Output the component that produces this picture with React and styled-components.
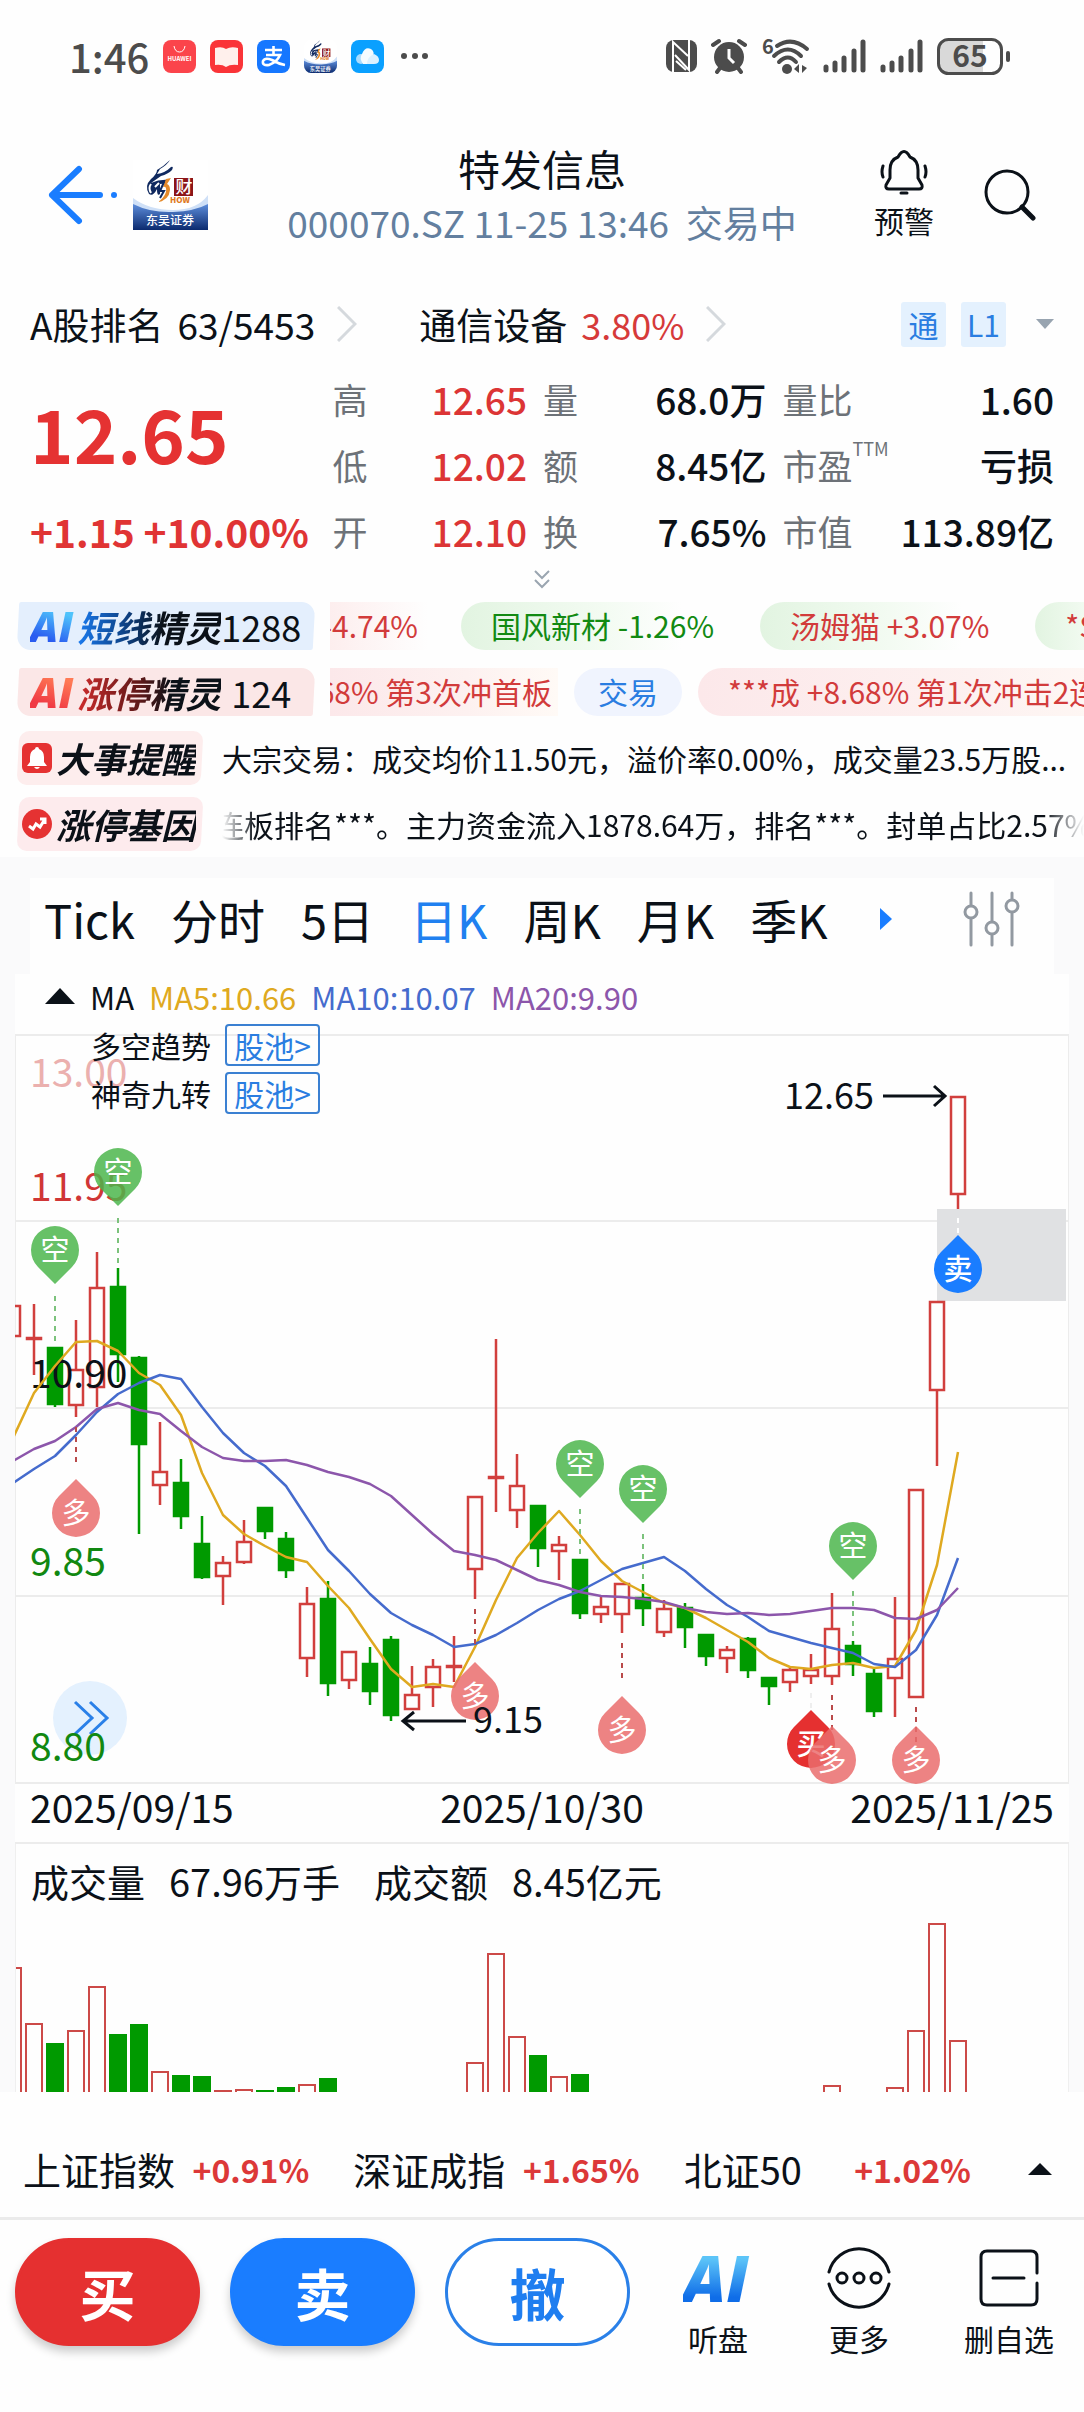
import React from "react";
import styled, { createGlobalStyle } from "styled-components";

const sans = `"Noto Sans CJK SC", "Noto Sans", sans-serif`;

const blue = "#1a7dff";
const ink = "#0b1118";

const GlobalStyle = createGlobalStyle`
  * {
    box-sizing: border-box;
  }
  body {
    margin: 0;
    background: #fefefe;
    color: ${ink};
    font-family: ${sans};
  }
  button {
    margin: 0;
    padding: 0;
    border: 0;
    background: none;
    color: inherit;
    font-family: inherit;
    cursor: pointer;
  }
  a {
    color: inherit;
    text-decoration: none;
  }
  svg {
    display: block;
    flex: none;
  }
  h1, p, ul, dl, dd, dt {
    margin: 0;
    padding: 0;
  }
`;

const Page = styled.div`
  display: flex;
  flex-direction: column;
  overflow: hidden;
`;

/* status bar */
const StatusBar = styled.div`
  display: flex;
  align-items: center;
  justify-content: space-between;
  height: 112px;
  padding: 0 73px 0 69px;
  color: #4c4c4c;
`;

const StatusGroup = styled.div`
  display: flex;
  align-items: center;
  gap: 14px;
`;

const Clock = styled.span`
  font-size: 40px;
  font-weight: 500;
  line-height: 46px;
`;

/* header */
const Header = styled.header`
  display: grid;
  grid-template-columns: 1fr auto 1fr;
  align-items: center;
  height: 170px;
  padding: 0 48px 4px;
`;

const HeaderSide = styled.div`
  display: flex;
  align-items: center;
  justify-content: ${(p) => (p.$end ? "flex-end" : "flex-start")};
  gap: ${(p) => (p.$end ? 50 : 15)}px;
`;

const HeaderTitle = styled.div`
  text-align: center;
`;

const StockName = styled.h1`
  font-size: 42px;
  font-weight: 400;
  line-height: 54px;
`;

const StockMeta = styled.p`
  color: #637f9f;
  font-size: 37px;
  line-height: 54px;
  white-space: pre;
`;

const AlertButton = styled.button`
  display: flex;
  flex-direction: column;
  align-items: center;
  font-size: 30px;
  line-height: 42px;
  gap: 4px;
`;

/* rank row */
const RankRow = styled.div`
  display: flex;
  align-items: center;
  height: 84px;
  padding: 0 30px;
`;

const RankLink = styled.a`
  display: flex;
  align-items: center;
  margin-right: 62px;
  gap: 14px;
  font-size: 37px;
  white-space: nowrap;

  svg {
    margin-left: 8px;
  }
`;

const Rise = styled.span`
  color: #d63a3a;
  font-size: 36px;
`;

const Badges = styled.div`
  display: flex;
  align-items: center;
  gap: 15px;
  margin-left: auto;

  svg {
    margin-left: 15px;
  }
`;

const Badge = styled.span`
  width: 45px;
  border-radius: 3px;
  background: #e4f1fe;
  color: #2a7de1;
  font-size: 30px;
  line-height: 45px;
  text-align: center;
`;

/* quote */
const Quote = styled.section`
  display: grid;
  grid-template-columns: 286fr 194fr 223fr 271fr;
  grid-template-rows: repeat(3, 66px);
  gap: 0 16px;
  align-items: center;
  padding: 0 30px;
`;

const Price = styled.strong`
  grid-row: span 2;
  color: #e53232;
  font-size: 74px;
  font-weight: 700;
  line-height: 96px;
`;

const Change = styled.strong`
  color: #e03434;
  font-size: 39px;
  font-weight: 700;
  line-height: 60px;
  white-space: nowrap;
`;

const Stat = styled.dl`
  display: flex;
  align-items: center;
  justify-content: space-between;
  white-space: nowrap;

  dt {
    color: #6d7278;
    font-size: 35px;
    line-height: 48px;
  }
  sup {
    font-size: 18px;
    line-height: 0;
    vertical-align: 24px;
  }
  dd {
    color: ${(p) => (p.$up ? "#dc3535" : ink)};
    font-size: 37px;
    font-weight: 500;
    line-height: 48px;
  }
`;

const Expand = styled.button`
  display: flex;
  align-items: center;
  justify-content: center;
  height: 29px;
`;

/* feed rows */
const FeedRow = styled.div`
  display: flex;
  align-items: center;
  height: 66px;
  padding-left: 18px;
`;

const FeedTag = styled.div`
  position: relative;
  display: flex;
  flex: none;
  align-items: center;
  width: ${(p) => (p.$wide ? 296 : 184)}px;
  height: ${(p) => (p.$wide ? 48 : 54)}px;
  margin-right: ${(p) => (p.$wide ? 16 : 20)}px;
  padding-left: ${(p) => (p.$wide ? 12 : 4)}px;
  gap: ${(p) => (p.$wide ? 0 : 4)}px;
  white-space: nowrap;
  z-index: 0;

  &::before {
    content: "";
    position: absolute;
    inset: 0;
    z-index: -1;
    border-radius: ${(p) => (p.$wide ? "2px 14px 2px 14px" : "10px")};
    background: ${(p) => p.$bg};
    transform: skewX(-3deg);
  }
`;

const TagTitle = styled.span`
  background: ${(p) => p.$fill || ink};
  background-clip: text;
  color: transparent;
  font-size: ${(p) => (p.$small ? 35 : 36)}px;
  font-style: italic;
  font-weight: 700;
  line-height: 48px;
`;

const Count = styled.span`
  min-width: 80px;
  font-size: 36px;
  line-height: 48px;
  text-align: center;
`;

const AiMark = styled.span`
  padding-right: 4px;
  background: ${(p) => p.$fill};
  background-clip: text;
  color: transparent;
  font-family: "Open Sans", sans-serif;
  font-size: ${(p) => p.$size}px;
  font-style: italic;
  font-weight: 800;
  line-height: 48px;
`;

const Ticker = styled.div`
  display: flex;
  flex: 1;
  min-width: 0;
  gap: 16px;
  overflow: hidden;
`;

const Chip = styled.a`
  display: flex;
  flex: none;
  justify-content: flex-end;
  width: ${(p) => (p.$cut ? `${p.$cut}px` : "auto")};
  height: 48px;
  padding: 0 ${(p) => p.$pad || 30}px;
  padding-left: ${(p) => (p.$cut ? 0 : p.$pad || 30)}px;
  overflow: hidden;
  border-radius: ${(p) => (p.$cut ? "0" : "24px")};
  background: ${(p) => p.$bg};
  color: ${(p) => p.$color || "#d23b3b"};
  font-size: 30px;
  line-height: 46px;
  white-space: nowrap;
`;

const FeedText = styled.p`
  flex: 1;
  min-width: 0;
  padding-right: 8px;
  overflow: hidden;
  font-size: 30px;
  line-height: 48px;
  text-overflow: ellipsis;
  white-space: nowrap;
`;

const FeedMarquee = styled(FeedText)`
  padding-right: 0;
  text-indent: -8px;
  text-overflow: clip;
  mask-image: linear-gradient(
    90deg,
    transparent,
    #000 34px,
    #000 calc(100% - 40px),
    transparent
  );
`;

/* chart */
const ChartSection = styled.section`
  padding: 21px 15px 0;
  background: #fafafb;
`;

const Tabs = styled.nav`
  display: flex;
  align-items: center;
  height: 96px;
  margin: 0 15px;
  padding: 0 34px 14px 14px;
  gap: 36px;
  background: #fefefe;
`;

const Tab = styled.button`
  color: ${(p) => (p.$active ? "#2080f0" : ink)};
  font-size: 47px;
  line-height: 60px;
  white-space: nowrap;
`;

const IconButton = styled.button`
  margin-left: ${(p) => (p.$last ? "auto" : "16px")};
`;

const ChartPanel = styled.div`
  background: #fefefe;
`;

const Legend = styled.div`
  display: flex;
  align-items: center;
  height: 60px;
  padding: 0 30px 16px;
  gap: 15px;
  font-size: 31px;
`;

const LegendItem = styled.span`
  color: ${(p) => p.$color};
`;

const ChartArea = styled.div`
  position: relative;

  > svg {
    width: 100%;
    height: auto;
  }
`;

const PoolList = styled.div`
  position: absolute;
  top: -13px;
  left: 76px;
`;

const PoolRow = styled.div`
  display: flex;
  align-items: center;
  height: 48px;
  gap: 14px;
  font-size: 30px;
`;

const PoolButton = styled.button`
  width: 95px;
  height: 42px;
  border: 2px solid #3a80d2;
  border-radius: 4px;
  color: #2a7de1;
  font-size: 30px;
  line-height: 36px;
`;

const Dates = styled.div`
  display: flex;
  justify-content: space-between;
  height: 60px;
  padding: 0 15px;
  border-bottom: 2px solid #ececec;
  font-size: 39px;
  line-height: 45px;
`;

const VolumeText = styled.p`
  display: flex;
  padding: 10px 15px 2px;
  gap: 34px;
  font-size: 38px;
  line-height: 54px;
`;

const VolumeItem = styled.span`
  display: flex;
  gap: 24px;
`;

const VolumeArea = styled.div`
  border: solid #efefef;
  border-width: 0 1px;

  svg {
    width: 100%;
    height: auto;
  }
`;

/* footer */
const IndexBar = styled.div`
  display: grid;
  grid-template-columns: 286fr 286fr 287fr 37fr;
  gap: 44px;
  align-items: center;
  height: 128px;
  padding: 28px 32px 0 23px;
  border-bottom: 3px solid #ebebeb;

  > svg {
    justify-self: end;
  }
`;

const IndexItem = styled.a`
  display: flex;
  align-items: center;
  justify-content: space-between;
  font-size: 38px;
  line-height: 54px;
  white-space: nowrap;

  strong {
    color: #dc3838;
    font-size: 32px;
    font-weight: 700;
  }
`;

const ActionBar = styled.footer`
  display: flex;
  align-items: flex-start;
  padding: 18px 30px 60px 15px;
`;

const TradeButton = styled.button`
  width: 185px;
  height: 108px;
  margin-right: 30px;
  border: 3px solid ${(p) => p.$line};
  border-radius: 54px;
  background: ${(p) => p.$bg};
  box-shadow: ${(p) => (p.$flat ? "none" : "0 6px 10px rgba(0, 0, 0, 0.2)")};
  color: ${(p) => p.$color};
  font-size: 56px;
  font-weight: 700;
  line-height: 96px;
`;

const Tools = styled.div`
  display: grid;
  flex: 1;
  grid-template-columns: 72px 1fr auto;
  padding-left: 22px;
`;

const Tool = styled.button`
  display: flex;
  flex-direction: column;
  align-items: center;
  font-size: 30px;
  line-height: 40px;
`;

const ToolIcon = styled.span`
  display: flex;
  align-items: center;
  justify-content: center;
  height: 80px;
`;

const Svg = ({ w, h, children, ...rest }) => (
  <svg width={w} height={h} viewBox={`0 0 ${w} ${h}`} fill="none" aria-hidden="true" {...rest}>
    {children}
  </svg>
);

const BrokerLogo = ({ w = 75, h = 70, round = 0 }) => (
  <svg width={w} height={h} viewBox="0 0 75 70" preserveAspectRatio="none" aria-hidden="true">
    <defs>
      <linearGradient id={`wave${w}`} x1="0" y1="0" x2="0" y2="1">
        <stop offset="0" stopColor="#5d8ddb" />
        <stop offset="1" stopColor="#0b2a6e" />
      </linearGradient>
      <clipPath id={`clip${w}`}>
        <rect width="75" height="70" rx={round} />
      </clipPath>
    </defs>
    <g clipPath={`url(#clip${w})`}>
      <rect width="75" height="70" fill="#fff" />
      <path d="M0 38Q16 50 40 50T75 35V70H0Z" fill="#cfe0f7" />
      <path d="M0 44Q18 53 40 52T75 44V70H0Z" fill={`url(#wave${w})`} />
      <path d="M37 0Q34 5 27 9L24 14Q32 13 38 7Q41 6 39 10Q35 14 28 16L18 23Q27 19 36 20Q33 24 27 24V34Q24 37 24 29Q20 37 16 34Q11 26 18 19Q24 14 24 10Q31 6 37 0Z" fill="#10295f" />
      <path d="M18 24Q15 28 18 33M22 27L26 23" stroke="#fff" strokeWidth="2" fill="none" />
      <path d="M33 19L30 27Q34 26 33 32Q31 38 25 42Q36 40 37 30Q37 25 34 24L38 18Z" fill="#e58a2b" />
      <path d="M31 22L27 31H31L27 38" stroke="#10295f" strokeWidth="2" fill="none" />
      <rect x="41" y="18" width="19" height="18" fill="#8c1518" />
      <text x="51" y="33" textAnchor="middle" fontSize="17" fontWeight="500" fill="#fff">财</text>
      <text x="47" y="43" textAnchor="middle" fontSize="8" fontWeight="900" fill="#e07a1f">HOW</text>
      <text x="37" y="65" textAnchor="middle" fontSize="12" fontWeight="500" fill="#fff">东吴证券</text>
    </g>
  </svg>
);

const StatusApps = () => (
  <>
    <Svg w={33} h={33}>
      <rect width="33" height="33" rx="8" fill="#fb444b" />
      <path d="M11 6Q12 12 16.500 12T22 6" stroke="#fff" strokeWidth="1" />
      <text x="16.500" y="21" textAnchor="middle" fontSize="6" fontWeight="700" fill="#fff">HUAWEI</text>
    </Svg>
    <Svg w={33} h={33}>
      <rect width="33" height="33" rx="8" fill="#fa3438" />
      <path d="M5 8Q12 6 16 9Q21 6 28 8V25Q20 24 16 27Q12 24 5 25Z" fill="#fff0ec" />
    </Svg>
    <Svg w={33} h={33}>
      <rect width="33" height="33" rx="8" fill="#1677ff" />
      <path d="M8 10H25M16.500 6V15M9 15H23Q20 22 12 25Q5 26 6 21Q8 17 15 20Q22 24 28 25" stroke="#fff" strokeWidth="2.600" />
    </Svg>
    <BrokerLogo w={33} h={33} round={16} />
    <Svg w={33} h={33}>
      <rect width="33" height="33" rx="8" fill="#0aa0ff" />
      <circle cx="10" cy="19" r="5" fill="#a9dcff" />
      <path d="M12 24Q8 18 11 14Q14 6 20 9Q24 12 22 16Q19 18 17 24Z" fill="#f4fbff" />
      <path d="M16 24Q16 17 23 14Q28 16 28 20T23 24Z" fill="#dcf1ff" />
    </Svg>
    <Svg w={33} h={33}>
      <circle cx="6" cy="16" r="3" fill="#4c4c4c" />
      <circle cx="17" cy="16" r="3" fill="#4c4c4c" />
      <circle cx="27" cy="16" r="3" fill="#4c4c4c" />
    </Svg>
  </>
);

const Signal = () => (
  <Svg w={43} h={36} stroke="#4c4c4c" strokeWidth="5" strokeLinecap="round">
    <path d="M3 29V32M12 25V32M21 20V32M31 13V32M40 4V32" />
  </Svg>
);

const StatusSignals = () => (
  <>
    <Svg w={31} h={32}>
      <rect width="31" height="32" rx="8" fill="#4c4c4c" />
      <path d="M7 32V2L22 16M23 0V30L9 15M10 21L20 30" stroke="#fff" strokeWidth="2" />
    </Svg>
    <Svg w={36} h={36} stroke="#4c4c4c" strokeLinecap="round">
      <circle cx="18" cy="19" r="15" fill="#4c4c4c" stroke="none" />
      <path d="M2 7L8 3M34 7L28 3M9 30L6 34M27 30L30 34" strokeWidth="4" />
      <path d="M18 11V20L23 25" stroke="#fff" strokeWidth="3" strokeLinecap="butt" />
    </Svg>
    <Svg w={48} h={36} stroke="#4c4c4c" strokeWidth="4" strokeLinecap="round" overflow="visible">
      <text x="1" y="16" fontSize="20" fontWeight="700" fill="#4c4c4c" stroke="none">6</text>
      <path d="M16 8Q31 -2 46 11M13 18Q27 5 40 18M18 24Q27 15 35 24" />
      <circle cx="26" cy="31" r="5" fill="#4c4c4c" stroke="none" />
      <path d="M38 26V35L33 31ZM41 35V27L46 30Z" fill="#4c4c4c" stroke="none" />
    </Svg>
    <Signal />
    <Signal />
    <Svg w={74} h={37}>
      <path d="M11 2H46V35H11Q2 35 2 26V11Q2 2 11 2Z" fill="#d9d9d9" />
      <rect x="1.500" y="1.500" width="63" height="34" rx="10" stroke="#4c4c4c" strokeWidth="3" />
      <rect x="69" y="13" width="4" height="11" rx="2" fill="#4c4c4c" />
      <text x="33" y="29" textAnchor="middle" fontSize="30" fontWeight="700" fill="#4c4c4c">65</text>
    </Svg>
  </>
);

const ChevronRight = () => (
  <Svg w={20} h={36} stroke="#d5d9dd" strokeWidth="3">
    <path d="M1 1L18 18L1 35" />
  </Svg>
);

// candle: [up, high, top, bottom, low], 21px per day
const CANDLES = [
  [1, 271, 271, 303, 303],
  [1, 270, 303, 305, 341],
  [0, 313, 313, 371, 373],
  [1, 286, 335, 372, 383],
  [1, 218, 253, 354, 373],
  [0, 234, 252, 321, 348],
  [0, 322, 323, 411, 500],
  [1, 388, 437, 452, 471],
  [0, 425, 448, 483, 495],
  [0, 482, 509, 544, 545],
  [1, 522, 528, 543, 571],
  [1, 486, 507, 529, 530],
  [0, 473, 473, 498, 505],
  [0, 498, 504, 537, 544],
  [1, 553, 569, 625, 643],
  [0, 547, 564, 650, 662],
  [1, 617, 617, 647, 655],
  [0, 613, 629, 658, 671],
  [0, 602, 605, 682, 687],
  [1, 632, 660, 676, 676],
  [1, 625, 632, 654, 673],
  [1, 602, 631, 632, 648],
  [1, 462, 462, 536, 565],
  [1, 305, 442, 443, 478],
  [1, 420, 451, 477, 494],
  [0, 471, 471, 515, 533],
  [1, 502, 510, 518, 546],
  [0, 525, 525, 580, 585],
  [1, 563, 572, 581, 589],
  [1, 549, 549, 581, 599],
  [0, 550, 563, 575, 592],
  [1, 566, 574, 599, 603],
  [0, 569, 573, 594, 614],
  [0, 600, 600, 623, 632],
  [1, 612, 615, 625, 639],
  [0, 603, 604, 637, 644],
  [0, 643, 643, 653, 671],
  [1, 634, 635, 649, 658],
  [1, 620, 635, 643, 650],
  [1, 559, 594, 643, 651],
  [0, 607, 611, 631, 642],
  [0, 635, 639, 678, 683],
  [1, 563, 624, 645, 683],
  [1, 455, 455, 664, 664],
  [1, 267, 267, 357, 432],
  [1, 62, 62, 161, 175],
];

const MA5 = [404, 359, 332, 308, 307, 317, 339, 351, 381, 439, 481, 500, 512, 523, 528, 552, 574, 605, 635, 653, 650, 653, 613, 566, 524, 499, 477, 501, 527, 547, 558, 569, 574, 584, 596, 608, 624, 633, 635, 631, 629, 634, 632, 596, 531, 418];
const MA10 = [449, 435, 422, 401, 378, 360, 349, 341, 345, 373, 399, 419, 432, 452, 484, 516, 537, 560, 579, 591, 601, 613, 610, 601, 589, 576, 565, 557, 546, 535, 529, 523, 537, 555, 571, 583, 597, 603, 609, 614, 619, 630, 633, 616, 581, 524];
const MA20 = [427, 415, 407, 393, 375, 369, 376, 380, 397, 413, 424, 427, 427, 426, 431, 438, 443, 450, 462, 481, 500, 517, 521, 526, 536, 546, 551, 558, 562, 563, 565, 568, 574, 578, 580, 579, 581, 580, 577, 574, 574, 576, 584, 585, 576, 554];

// pin: [day, tip, label, fill, dash start, dash end, dash colour, points down]
const PINS = [
  [5, 172, "空", "#4bb64bd8", 184, 232, "#7cc27c", true],
  [2, 250, "空", "#4bb64bd8", 262, 311, "#7cc27c", true],
  [27, 464, "空", "#4bb64bd8", 475, 522, "#7cc27c", true],
  [30, 489, "空", "#4bb64bd8", 500, 548, "#7cc27c", true],
  [40, 546, "空", "#4bb64bd8", 557, 605, "#7cc27c", true],
  [3, 445, "多", "#ea6d6dd8", 393, 430, "#b94a4a"],
  [22, 628, "多", "#ea6d6dd8", 575, 612, "#b94a4a"],
  [29, 662, "多", "#ea6d6dd8", 609, 645, "#b94a4a"],
  [38, 676, "买", "#e53030", 659, 674, "#eeeeee"],
  [39, 692, "多", "#ea6d6dd8", 661, 696, "#b94a4a"],
  [43, 692, "多", "#ea6d6dd8", 673, 710, "#b94a4a"],
  [45, 201, "卖", blue, 184, 200, "#ffffff"],
];

// volume: [day, height, up]
const VOLUMES = [
  [0, 125, 1], [1, 69, 1], [2, 49, 0], [3, 62, 1], [4, 106, 1], [5, 58, 0],
  [6, 68, 0], [7, 21, 1], [8, 17, 0], [9, 16, 0], [10, 2, 1], [11, 3, 1],
  [12, 2, 0], [13, 5, 0], [14, 8, 1], [15, 14, 0], [22, 30, 1], [23, 139, 1],
  [24, 56, 1], [25, 37, 0], [26, 16, 1], [27, 18, 0], [39, 7, 1], [42, 5, 1],
  [43, 62, 1], [44, 169, 1], [45, 52, 1],
];

const dayX = (i) => i * 21 - 2;
const line = (values) => values.map((y, i) => `${dayX(i)},${y}`).join(" ");

const Candle = ({ i, data: [up, high, top, bottom, low] }) => {
  const x = dayX(i);
  const color = up ? "#d13f3d" : "#009a00";
  return (
    <g stroke={color} strokeWidth="2.500">
      <path d={`M${x} ${high}V${top}M${x} ${bottom}V${low}`} />
      <rect
        x={x - 7}
        y={top + 1}
        width="14"
        height={Math.max(bottom - top - 2, 1)}
        fill={up ? "none" : color}
      />
    </g>
  );
};

const Pin = ({ data: [i, tip, label, fill, from, to, dash, down] }) => {
  const dir = down ? -1 : 1;
  return (
    <g>
      <path d={`M${dayX(i)} ${from}V${to}`} stroke={dash} strokeWidth="2" strokeDasharray="5 5" />
      <g transform={`translate(${dayX(i)} ${tip})`}>
        <path
          d={down ? "M0 0L-17 -17A24 24 0 1 1 17 -17Z" : "M0 0L-17 17A24 24 0 1 0 17 17Z"}
          fill={fill}
        />
        <text
          y={dir * 34 + 11}
          textAnchor="middle"
          fontSize="29"
          fill="#fff"
          fontWeight={label === "买" || label === "卖" ? 500 : 400}
        >
          {label}
        </text>
      </g>
    </g>
  );
};

const KLineChart = () => (
  <svg viewBox="0 0 1054 750" role="img" aria-label="日K">
    <path d="M0 1H1054M0 187H1054M0 374H1054M0 562H1054M0 749H1054" stroke="#ececec" strokeWidth="2" />
    <path d="M0.500 0V750M1053.500 0V750" stroke="#ececec" />
    <rect x="922" y="175" width="129" height="92" fill="#e0e1e3" />
    {CANDLES.map((data, i) => (
      <Candle key={i} i={i} data={data} />
    ))}
    <g fontSize="39">
      <text x="15" y="53" fill="#ebb0ae">13.00</text>
      <text x="15" y="167" fill="#d03636">11.95</text>
      <text x="15" y="354" fill={ink}>10.90</text>
      <text x="15" y="542" fill="#118811">9.85</text>
    </g>
    <g fill="none" strokeWidth="2.500" strokeLinejoin="round">
      <polyline points={line(MA5)} stroke="#dfa920" />
      <polyline points={line(MA10)} stroke="#456bcd" />
      <polyline points={line(MA20)} stroke="#8c56ab" />
    </g>
    {PINS.map((data) => (
      <Pin key={data[0]} data={data} />
    ))}
    <g fontSize="36" fill={ink}>
      <text x="769" y="75">12.65</text>
      <text x="458" y="699">9.15</text>
    </g>
    <path
      d="M868 62H930M919 52L930 62L919 72M451 687H388M399 678L388 687L399 696"
      stroke={ink}
      strokeWidth="3"
      fill="none"
    />
    <circle cx="75" cy="684" r="37" fill="#e4f1fe" />
    <path d="M60 668L77 684L60 700M75 668L92 684L75 700" stroke="#2a80e8" strokeWidth="3" fill="none" />
    <text x="15" y="727" fontSize="39" fill="#118811">8.80</text>
  </svg>
);

const VolumeChart = () => (
  <svg viewBox="0 0 1052 182" role="img" aria-label="成交量">
    {VOLUMES.map(([i, h, up]) => (
      <rect
        key={i}
        x={dayX(i) - 9}
        y={183 - h}
        width="16"
        height={h + 4}
        fill={up ? "#fefefe" : "#009a00"}
        stroke={up ? "#cc4a48" : "#009a00"}
        strokeWidth="2"
      />
    ))}
  </svg>
);

const STATS = [
  ["高", "12.65", true],
  ["量", "68.0万"],
  ["量比", "1.60"],
  ["低", "12.02", true],
  ["额", "8.45亿"],
  ["市盈", "亏损", false, "TTM"],
  ["开", "12.10", true],
  ["换", "7.65%"],
  ["市值", "113.89亿"],
];

const TABS = ["Tick", "分时", "5日", "日K", "周K", "月K", "季K"];

const INDEXES = [
  ["上证指数", "+0.91%"],
  ["深证成指", "+1.65%"],
  ["北证50", "+1.02%"],
];

const greenFade = "linear-gradient(90deg, #e2f4e1, #f3fbf2 50%, #fefefe 78%)";
const pinkFade = "linear-gradient(90deg, #fce8ea, #fdf1f0 60%, #fffaf6)";
const pinkTail = "linear-gradient(90deg, #fdeeee, #fefefe 85%)";

const StatItem = ({ data: [label, value, up, sup] }) => (
  <Stat $up={up}>
    <dt>
      {label}
      {sup && <sup>{sup}</sup>}
    </dt>
    <dd>{value}</dd>
  </Stat>
);

function App() {
  return (
    <Page>
      <GlobalStyle />
      <StatusBar>
        <StatusGroup>
          <Clock>1:46</Clock>
          <StatusApps />
        </StatusGroup>
        <StatusGroup>
          <StatusSignals />
        </StatusGroup>
      </StatusBar>

      <Header>
        <HeaderSide>
          <button aria-label="返回">
            <Svg w={70} h={60} stroke={blue} strokeWidth="6" strokeLinecap="round" strokeLinejoin="round">
              <path d="M31 4L4 30L31 56M4 30H52" />
              <circle cx="66" cy="30" r="3" fill={blue} stroke="none" />
            </Svg>
          </button>
          <BrokerLogo />
        </HeaderSide>
        <HeaderTitle>
          <StockName>特发信息</StockName>
          <StockMeta>000070.SZ 11-25 13:46  交易中</StockMeta>
        </HeaderTitle>
        <HeaderSide $end>
          <AlertButton>
            <Svg w={48} h={46} stroke={ink} strokeWidth="3" strokeLinecap="round" strokeLinejoin="round">
              <path d="M18 8Q24 -3 30 8Q38 11 38 21V29L42 36Q43 40 39 40H9Q5 40 6 36L10 29V21Q10 11 18 8Z" />
              <path d="M21 44H27M3 17Q1 23 3 28M45 17Q47 23 45 28" />
            </Svg>
            预警
          </AlertButton>
          <button aria-label="搜索">
            <Svg w={52} h={52} stroke={ink} strokeLinecap="round">
              <circle cx="23" cy="23" r="21" strokeWidth="3" />
              <path d="M38 38L49 49" strokeWidth="5" />
            </Svg>
          </button>
        </HeaderSide>
      </Header>

      <RankRow>
        <RankLink href="#rank">
          <span>A股排名</span>
          <span>63/5453</span>
          <ChevronRight />
        </RankLink>
        <RankLink href="#sector">
          <span>通信设备</span>
          <Rise>3.80%</Rise>
          <ChevronRight />
        </RankLink>
        <Badges>
          <Badge>通</Badge>
          <Badge>L1</Badge>
          <Svg w={18} h={10}>
            <path d="M0 0H18L9 10Z" fill="#98a4b0" />
          </Svg>
        </Badges>
      </RankRow>

      <Quote>
        <Price>12.65</Price>
        {STATS.slice(0, 6).map((data) => (
          <StatItem key={data[0]} data={data} />
        ))}
        <Change>+1.15 +10.00%</Change>
        {STATS.slice(6).map((data) => (
          <StatItem key={data[0]} data={data} />
        ))}
      </Quote>

      <Expand aria-label="展开">
        <Svg w={16} h={20} stroke="#9aa5b0" strokeWidth="2">
          <path d="M1 2L8 9L15 2M1 11L8 18L15 11" />
        </Svg>
      </Expand>

      <FeedRow>
        <FeedTag $wide $bg="#e4effd">
          <AiMark $size={42} $fill="linear-gradient(200deg, #4fc3fb 25%, #2a5cf0 75%)">AI</AiMark>
          <TagTitle $fill="linear-gradient(90deg, #1a7bf0, #0d3f80 35%, #0b1118 60%)">短线精灵</TagTitle>
          <Count>1288</Count>
        </FeedTag>
        <Ticker>
          <Chip $cut={115} $pad={27} $bg={pinkTail}>-4.74%</Chip>
          <Chip $bg={greenFade} $color="#128a12">国风新材 -1.26%</Chip>
          <Chip $bg={greenFade}>汤姆猫 +3.07%</Chip>
          <Chip $bg={greenFade}>*ST</Chip>
        </Ticker>
      </FeedRow>

      <FeedRow>
        <FeedTag $wide $bg="#fbe7e7">
          <AiMark $size={42} $fill="linear-gradient(200deg, #ff7a55 25%, #f03a44 75%)">AI</AiMark>
          <TagTitle $fill="linear-gradient(90deg, #cf2c2c, #5a1818 45%, #0b1118 65%)">涨停精灵</TagTitle>
          <Count>124</Count>
        </FeedTag>
        <Ticker>
          <Chip $cut={228} $pad={6} $bg={pinkFade}>+9.68% 第3次冲首板</Chip>
          <Chip $pad={24} $bg="#f0f4fe" $color="#2a7de1" as="button">交易</Chip>
          <Chip $bg={pinkFade}>***成 +8.68% 第1次冲击2连板</Chip>
        </Ticker>
      </FeedRow>

      <FeedRow>
        <FeedTag $bg="#fdeded">
          <Svg w={30} h={30}>
            <rect width="30" height="30" rx="6" fill="#e53232" />
            <path d="M15 4Q17 4 17 6Q22 8 22 14V19L25 23H5L8 19V14Q8 8 13 6Q13 4 15 4ZM12 24H18Q15 28 12 24Z" fill="#fff" />
          </Svg>
          <TagTitle $small>大事提醒</TagTitle>
        </FeedTag>
        <FeedText>大宗交易：成交均价11.50元，溢价率0.00%，成交量23.5万股...</FeedText>
      </FeedRow>

      <FeedRow>
        <FeedTag $bg="#fdebed">
          <Svg w={30} h={30}>
            <circle cx="15" cy="15" r="15" fill="#e53232" />
            <path d="M7 17L11 20L14 15L18 18L23 10M18 10H23V15" stroke="#fff" strokeWidth="3" />
          </Svg>
          <TagTitle $small>涨停基因</TagTitle>
        </FeedTag>
        <FeedMarquee>连板排名***。主力资金流入1878.64万，排名***。封单占比2.57%</FeedMarquee>
      </FeedRow>

      <ChartSection>
        <Tabs>
          {TABS.map((name) => (
            <Tab key={name} $active={name === "日K"}>
              {name}
            </Tab>
          ))}
          <IconButton aria-label="更多周期">
            <Svg w={12} h={22}>
              <path d="M0 0L12 11L0 22Z" fill={blue} />
            </Svg>
          </IconButton>
          <IconButton $last aria-label="设置">
            <Svg w={57} h={56} stroke="#9299a1" strokeWidth="3" strokeLinecap="round">
              <path d="M8 2V14M8 28V54M29 2V30M29 44V54M49 2V8M49 22V54" />
              <circle cx="8" cy="21" r="6" />
              <circle cx="29" cy="37" r="6" />
              <circle cx="49" cy="15" r="6" />
            </Svg>
          </IconButton>
        </Tabs>

        <ChartPanel>
          <Legend>
            <Svg w={30} h={16}>
              <path d="M0 16L15 0L30 16Z" fill={ink} />
            </Svg>
            <LegendItem>MA</LegendItem>
            <LegendItem $color="#dfa920">MA5:10.66</LegendItem>
            <LegendItem $color="#456bcd">MA10:10.07</LegendItem>
            <LegendItem $color="#8c56ab">MA20:9.90</LegendItem>
          </Legend>
          <ChartArea>
            <KLineChart />
            <PoolList>
              <PoolRow>
                多空趋势<PoolButton>股池&gt;</PoolButton>
              </PoolRow>
              <PoolRow>
                神奇九转<PoolButton>股池&gt;</PoolButton>
              </PoolRow>
            </PoolList>
          </ChartArea>
          <Dates>
            <span>2025/09/15</span>
            <span>2025/10/30</span>
            <span>2025/11/25</span>
          </Dates>
          <VolumeArea>
            <VolumeText>
              <VolumeItem>
                <span>成交量</span>
                <span>67.96万手</span>
              </VolumeItem>
              <VolumeItem>
                <span>成交额</span>
                <span>8.45亿元</span>
              </VolumeItem>
            </VolumeText>
            <VolumeChart />
          </VolumeArea>
        </ChartPanel>
      </ChartSection>

      <IndexBar>
        {INDEXES.map(([name, change]) => (
          <IndexItem key={name} href={`#${name}`}>
            {name}
            <strong>{change}</strong>
          </IndexItem>
        ))}
        <Svg w={24} h={12}>
          <path d="M0 12L12 0L24 12Z" fill={ink} />
        </Svg>
      </IndexBar>

      <ActionBar>
        <TradeButton $bg="#e53030" $line="#e53030" $color="#fff">买</TradeButton>
        <TradeButton $bg={blue} $line={blue} $color="#fff">卖</TradeButton>
        <TradeButton $flat $bg="#fff" $line="#2a80e8" $color="#1f7ef0">撤</TradeButton>
        <Tools>
          <Tool>
            <ToolIcon>
              <AiMark $size={64} $fill="linear-gradient(180deg, #5cc4f8 10%, #0f6de8 90%)">AI</AiMark>
            </ToolIcon>
            听盘
          </Tool>
          <Tool>
            <ToolIcon>
              <Svg w={64} h={66} stroke={ink} strokeWidth="3" strokeLinecap="round">
                <path d="M2 27A31 31 0 0 1 62 27M2 39A31 31 0 0 0 62 39" />
                <circle cx="15" cy="33" r="5" />
                <circle cx="32" cy="33" r="5" />
                <circle cx="49" cy="33" r="5" />
              </Svg>
            </ToolIcon>
            更多
          </Tool>
          <Tool>
            <ToolIcon>
              <Svg w={60} h={58} stroke={ink} strokeWidth="3" strokeLinecap="round">
                <path d="M58 24V8Q58 2 52 2H8Q2 2 2 8V50Q2 56 8 56H52Q58 56 58 50V34M14 29H45" />
              </Svg>
            </ToolIcon>
            删自选
          </Tool>
        </Tools>
      </ActionBar>
    </Page>
  );
}

export default App;
